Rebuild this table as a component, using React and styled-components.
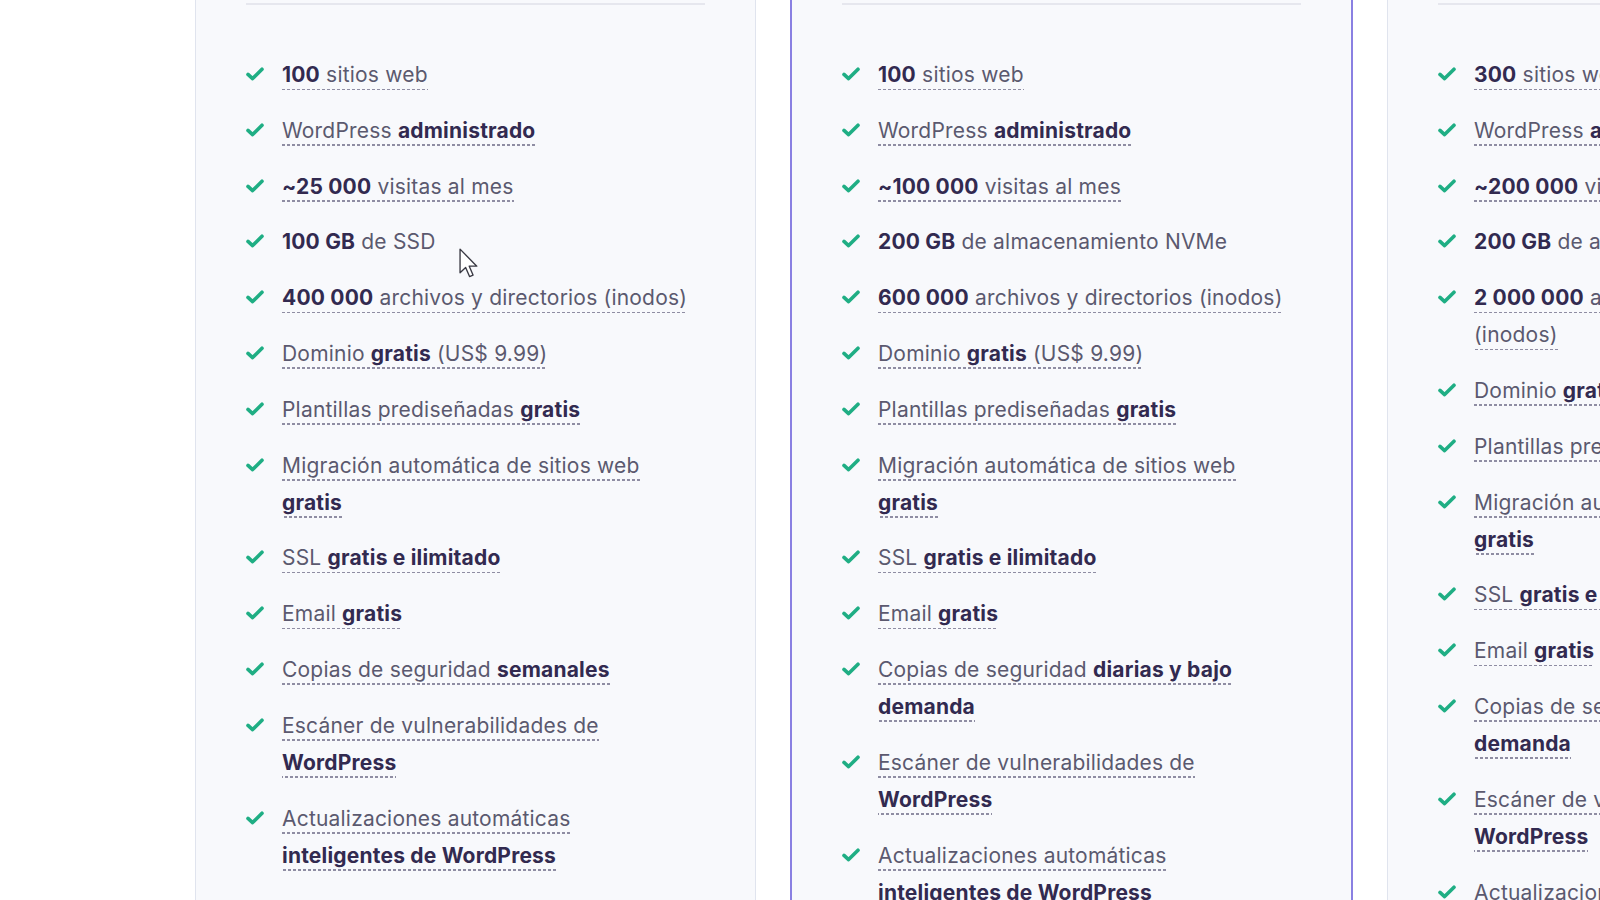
import React from 'react'
import styled, { createGlobalStyle } from 'styled-components'

const GlobalStyle = createGlobalStyle`
  html, body {
    margin: 0;
    padding: 0;
    background: #ffffff;
  }
  body {
    font-family: Inter, "Noto Sans", sans-serif;
    -webkit-font-smoothing: antialiased;
  }
`

const plans = [
  {
    id: 'premium',
    features: [
      [['100', true], [' sitios web']],
      [['WordPress '], ['administrado', true]],
      [['~25 000', true], [' visitas al mes']],
      { plain: true, parts: [['100 GB', true], [' de SSD']] },
      [['400 000', true], [' archivos y directorios (inodos)']],
      [['Dominio '], ['gratis', true], [' (US$ 9.99)']],
      [['Plantillas prediseñadas '], ['gratis', true]],
      [['Migración automática de sitios web '], ['gratis', true]],
      [['SSL '], ['gratis e ilimitado', true]],
      [['Email '], ['gratis', true]],
      [['Copias de seguridad '], ['semanales', true]],
      [['Escáner de vulnerabilidades de '], ['WordPress', true]],
      [['Actualizaciones automáticas '], ['inteligentes de WordPress', true]],
    ],
  },
  {
    id: 'business',
    featured: true,
    features: [
      [['100', true], [' sitios web']],
      [['WordPress '], ['administrado', true]],
      [['~100 000', true], [' visitas al mes']],
      { plain: true, parts: [['200 GB', true], [' de almacenamiento NVMe']] },
      [['600 000', true], [' archivos y directorios (inodos)']],
      [['Dominio '], ['gratis', true], [' (US$ 9.99)']],
      [['Plantillas prediseñadas '], ['gratis', true]],
      [['Migración automática de sitios web '], ['gratis', true]],
      [['SSL '], ['gratis e ilimitado', true]],
      [['Email '], ['gratis', true]],
      [['Copias de seguridad '], ['diarias y bajo demanda', true]],
      [['Escáner de vulnerabilidades de '], ['WordPress', true]],
      [['Actualizaciones automáticas '], ['inteligentes de WordPress', true]],
    ],
  },
  {
    id: 'cloud',
    features: [
      [['300', true], [' sitios web']],
      [['WordPress '], ['administrado', true]],
      [['~200 000', true], [' visitas al mes']],
      { plain: true, parts: [['200 GB', true], [' de almacenamiento NVMe']] },
      [['2 000 000', true], [' archivos y directorios (inodos)']],
      [['Dominio '], ['gratis', true], [' (US$ 9.99)']],
      [['Plantillas prediseñadas '], ['gratis', true]],
      [['Migración automática de sitios web '], ['gratis', true]],
      [['SSL '], ['gratis e ilimitado', true]],
      [['Email '], ['gratis', true]],
      [['Copias de seguridad '], ['diarias y bajo demanda', true]],
      [['Escáner de vulnerabilidades de '], ['WordPress', true]],
      [['Actualizaciones automáticas '], ['inteligentes de WordPress', true]],
    ],
  },
]

const Page = styled.div`
  position: relative;
  width: 1600px;
  height: 900px;
  overflow: hidden;
  background: #ffffff;
`

const Cards = styled.div`
  display: grid;
  grid-template-columns: 561px 563px 561px;
  column-gap: 34px;
  align-items: start;
  margin-top: -40px;
  padding-left: 195px;
`

const Card = styled.section`
  box-sizing: border-box;
  min-height: 1000px;
  padding: ${({ $featured }) => ($featured ? '41px 50px 40px' : '42px 50px 40px')};
  background: #f8f9fc;
  border: ${({ $featured }) => ($featured ? '2px solid #8a80e2' : '1px solid #e0e4ee')};
  border-radius: 4px;
`

const Divider = styled.hr`
  margin: 0;
  border: none;
  border-top: 2px solid #e6e7ee;
`

const FeatureList = styled.ul`
  list-style: none;
  margin: 51px 0 0;
  padding: 0;
  display: flex;
  flex-direction: column;
  gap: 18.8px;
`

const Feature = styled.li`
  display: flex;
  align-items: flex-start;
  gap: 18px;
  font-size: 21px;
  line-height: 37px;
  letter-spacing: 0.2px;
  color: #5b596f;
`

const CheckBox = styled.span`
  flex: none;
  display: flex;
  align-items: center;
  width: 18px;
  height: 36px;
  color: #1fae84;
`

const Label = styled.span`
  max-width: 408px;
`

const Tip = styled.span`
  padding-bottom: 3px;
  background-image: ${({ $plain }) =>
    $plain ? 'none' : 'linear-gradient(to right, #8f8da3 55%, transparent 0)'};
  background-size: 5px 1.5px;
  background-repeat: repeat-x;
  background-position: 0 100%;
`

const Strong = styled.b`
  font-weight: 700;
  color: #322a50;
`

const Cursor = styled.svg`
  position: absolute;
  left: 459px;
  top: 248px;
  width: 19px;
  height: 30px;
  pointer-events: none;
`

function Check() {
  return (
    <svg width="18" height="14" viewBox="0 0 18 14" fill="none">
      <path
        d="M2 7.4 L6.6 11.6 L16 2.2"
        stroke="currentColor"
        strokeWidth="3.6"
        strokeLinecap="round"
        strokeLinejoin="round"
      />
    </svg>
  )
}

function FeatureItem({ feature }) {
  const parts = Array.isArray(feature) ? feature : feature.parts
  const plain = !Array.isArray(feature) && feature.plain
  return (
    <Feature>
      <CheckBox>
        <Check />
      </CheckBox>
      <Label>
        <Tip $plain={plain}>
          {parts.map(([text, bold], i) =>
            bold ? <Strong key={i}>{text}</Strong> : <React.Fragment key={i}>{text}</React.Fragment>
          )}
        </Tip>
      </Label>
    </Feature>
  )
}

export default function App() {
  return (
    <Page>
      <GlobalStyle />
      <Cards>
        {plans.map((plan) => (
          <Card key={plan.id} $featured={plan.featured}>
            <Divider />
            <FeatureList>
              {plan.features.map((f, i) => (
                <FeatureItem key={i} feature={f} />
              ))}
            </FeatureList>
          </Card>
        ))}
      </Cards>
      <Cursor viewBox="0 0 12.6 19.8">
        <path
          d="M0.7 0.7 L0.7 16.4 L4.4 12.9 L7 18.9 L9.3 17.9 L6.8 12 L11.8 12 Z"
          fill="#ffffff"
          stroke="#3a3a44"
          strokeWidth="0.9"
          strokeLinejoin="round"
        />
      </Cursor>
    </Page>
  )
}
